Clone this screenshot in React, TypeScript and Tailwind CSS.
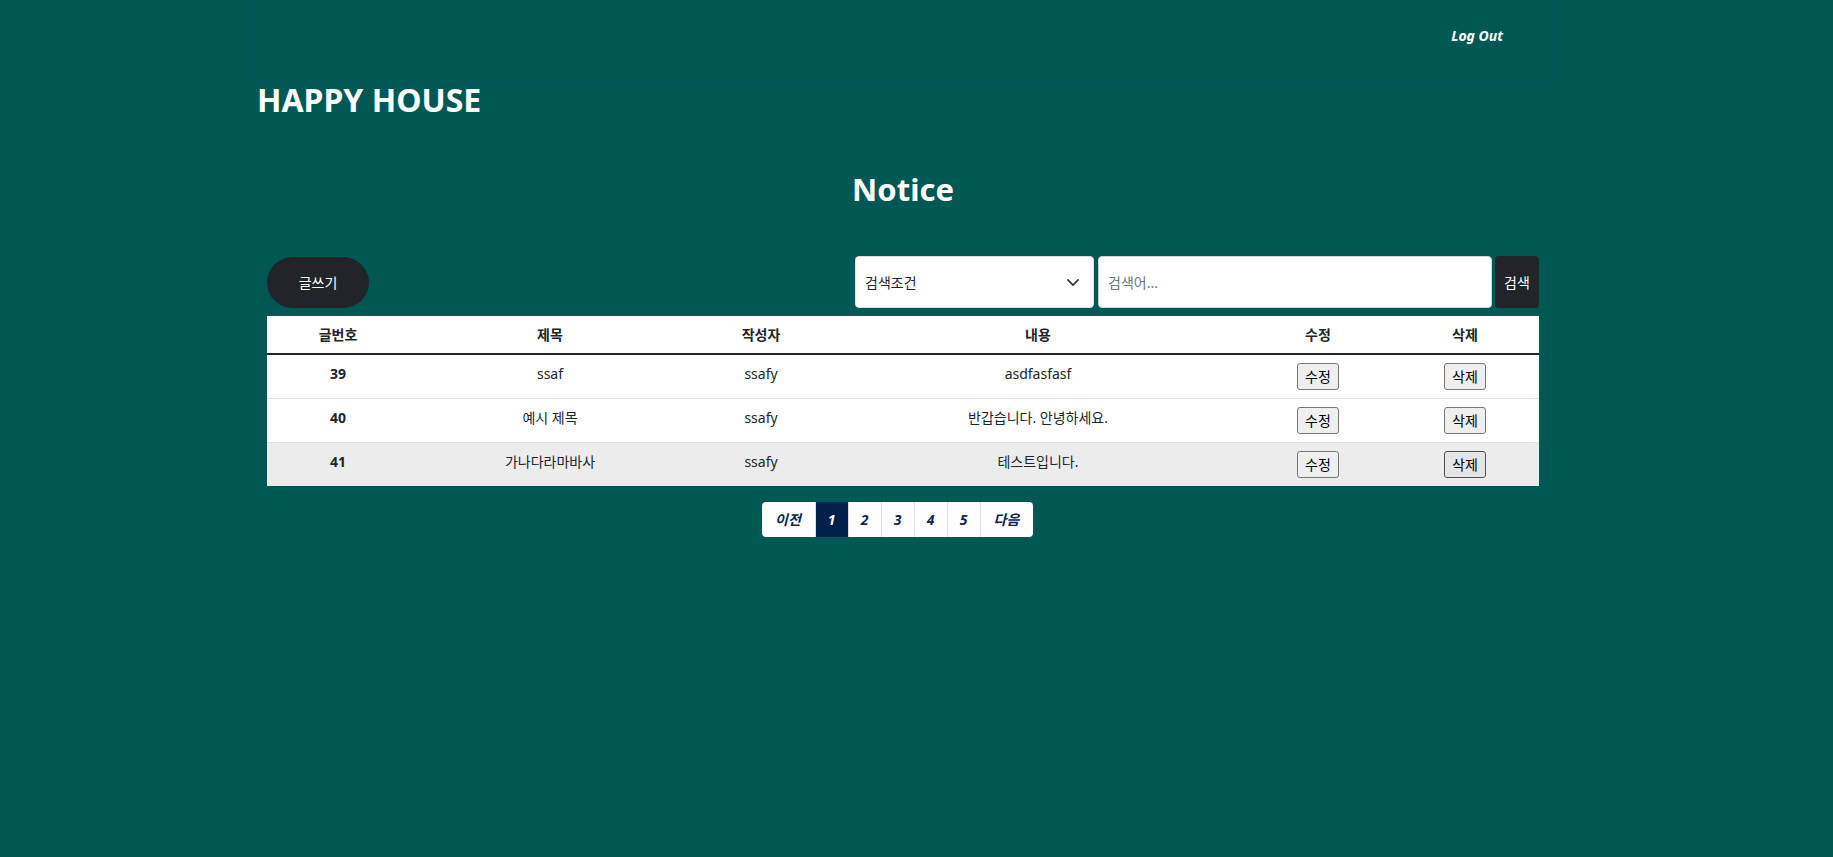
import { useState } from "react";

const NOTICES = [
    { no: 39, title: "ssaf", writer: "ssafy", content: "asdfasfasf" },
    { no: 40, title: "예시 제목", writer: "ssafy", content: "반갑습니다. 안녕하세요." },
    { no: 41, title: "가나다라마바사", writer: "ssafy", content: "테스트입니다." },
];

const COLUMNS = [
    { label: "글번호", width: "w-[142px]" },
    { label: "제목", width: "w-[282px]" },
    { label: "작성자", width: "w-[140px]" },
    { label: "내용", width: "w-[414px]" },
    { label: "수정", width: "w-[146px]" },
    { label: "삭제", width: "w-[148px]" },
];

const RowButton = ({ label, pressed }: { label: string; pressed?: boolean }) => (
    <button
        className={`h-[27px] rounded-[3px] border px-[7px] text-[14px] leading-[20px] text-black ${
            pressed ? "border-[#4f4f4f] bg-[#e5e5e5]" : "border-[#767676] bg-[#efefef]"
        }`}
    >
        {label}
    </button>
);

const Pagination = () => {
    const pages = [1, 2, 3, 4, 5];
    return (
        <nav className="flex h-[35px] overflow-hidden rounded-[4px] bg-white text-[14px] font-bold italic text-[#0a2652]">
            <a className="flex w-[53px] items-center justify-center">이전</a>
            {pages.map((p) => (
                <a
                    key={p}
                    className={`flex w-[33px] items-center justify-center border-l border-[#dee2e6] ${
                        p === 1 ? "border-[#00204a] bg-[#00204a] text-white" : ""
                    }`}
                >
                    {p}
                </a>
            ))}
            <a className="flex w-[53px] items-center justify-center border-l border-[#dee2e6]">다음</a>
        </nav>
    );
};

export default function App() {
    const [keyword, setKeyword] = useState("");

    return (
        <div className="min-h-screen w-full bg-[#005855] font-['Noto_Sans','Noto_Sans_CJK_KR',sans-serif] text-[#212529]">
            <div className="ml-[253px] w-[1299px]">
                {/* top bar */}
                <nav className="flex h-[81px] justify-end pr-[49px] pt-[26px] shadow-[0_3px_6px_rgba(0,0,0,0.04)]">
                    <a className="text-[14px] font-bold italic leading-[20px] text-white">Log Out</a>
                </nav>
                <h1 className="pl-[4px] text-[32px] font-bold leading-[38px] text-white">HAPPY HOUSE</h1>

                <div className="ml-[14px] w-[1272px]">
                    <h2 className="mt-[51px] text-center text-[31px] font-bold leading-[38px] text-white">Notice</h2>

                    {/* toolbar */}
                    <div className="mt-[48px] flex h-[52px] items-center justify-between">
                        <button className="h-[51px] w-[102px] rounded-full bg-[#212529] text-[14px] text-white">글쓰기</button>
                        <div className="flex h-[52px] items-stretch">
                            <div className="flex w-[239px] items-center justify-between rounded-[4px] border border-[#dee2e6] bg-white pl-[9px] pr-[14px] text-[14px] text-[#212529]">
                                <span>검색조건</span>
                                <svg width="12" height="7" viewBox="1 4 14 8" fill="none">
                                    <path d="m2 5 6 6 6-6" stroke="#343a40" strokeWidth="2" strokeLinecap="round" strokeLinejoin="round" />
                                </svg>
                            </div>
                            <input
                                value={keyword}
                                onChange={(e) => setKeyword(e.target.value)}
                                placeholder="검색어..."
                                className="ml-[4px] w-[394px] rounded-[4px] border border-[#ced4da] bg-white pl-[9px] text-[14px] text-[#212529] outline-none placeholder:text-[#6c757d]"
                            />
                            <button className="ml-[3px] w-[44px] rounded-[4px] bg-[#212529] text-[14px] text-white">검색</button>
                        </div>
                    </div>

                    {/* table */}
                    <table className="mt-[8px] w-full table-fixed border-collapse bg-white text-center text-[14px] leading-[21px]">
                        <thead>
                            <tr className="border-b-2 border-[#212529]">
                                {COLUMNS.map((c) => (
                                    <th key={c.label} className={`${c.width} px-2 py-2 font-bold`}>
                                        {c.label}
                                    </th>
                                ))}
                            </tr>
                        </thead>
                        <tbody>
                            {NOTICES.map((n, i) => (
                                <tr
                                    key={n.no}
                                    className={`border-b border-[#dee2e6] align-top last:border-b-0 ${i === 2 ? "bg-[#ececec]" : ""}`}
                                >
                                    <td className="px-2 py-2 font-bold">{n.no}</td>
                                    <td className="px-2 py-2">{n.title}</td>
                                    <td className="px-2 py-2">{n.writer}</td>
                                    <td className="px-2 py-2">{n.content}</td>
                                    <td className="px-2 py-2">
                                        <RowButton label="수정" />
                                    </td>
                                    <td className="px-2 py-2">
                                        <RowButton label="삭제" pressed={i === 2} />
                                    </td>
                                </tr>
                            ))}
                        </tbody>
                    </table>

                    <div className="mt-[16px] flex justify-center pr-[12px]">
                        <Pagination />
                    </div>
                </div>
            </div>
        </div>
    );
}
